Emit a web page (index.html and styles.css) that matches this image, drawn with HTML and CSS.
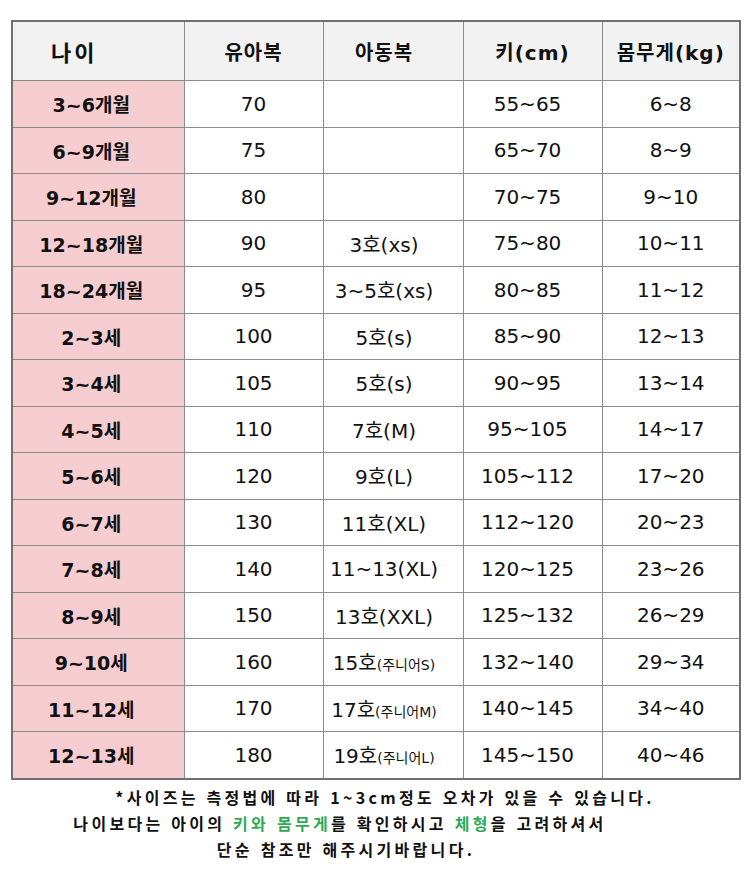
FILE: index.html
```html
<!DOCTYPE html>
<html lang="ko">
<head>
<meta charset="utf-8">
<link rel="stylesheet" href="styles.css">
</head>
<body>
<div class="page">
  <table class="size">
    <colgroup>
      <col class="c1"><col class="c2"><col class="c3"><col class="c4"><col class="c5">
    </colgroup>
    <thead>
      <tr><th class="first">나이</th><th>유아복</th><th class="left">아동복</th><th>키(cm)</th><th>몸무게(kg)</th></tr>
    </thead>
    <tbody>
      <tr><td class="age">3~6개월</td><td>70</td><td></td><td class="h">55~65</td><td>6~8</td></tr>
      <tr><td class="age">6~9개월</td><td>75</td><td></td><td class="h">65~70</td><td>8~9</td></tr>
      <tr><td class="age">9~12개월</td><td>80</td><td></td><td class="h">70~75</td><td>9~10</td></tr>
      <tr><td class="age">12~18개월</td><td>90</td><td class="left">3호(xs)</td><td class="h">75~80</td><td>10~11</td></tr>
      <tr><td class="age">18~24개월</td><td>95</td><td class="left">3~5호(xs)</td><td class="h">80~85</td><td>11~12</td></tr>
      <tr><td class="age">2~3세</td><td>100</td><td class="left">5호(s)</td><td class="h">85~90</td><td>12~13</td></tr>
      <tr><td class="age">3~4세</td><td>105</td><td class="left">5호(s)</td><td class="h">90~95</td><td>13~14</td></tr>
      <tr><td class="age">4~5세</td><td>110</td><td class="left">7호(M)</td><td class="h">95~105</td><td>14~17</td></tr>
      <tr><td class="age">5~6세</td><td>120</td><td class="left">9호(L)</td><td class="h">105~112</td><td>17~20</td></tr>
      <tr><td class="age">6~7세</td><td>130</td><td class="left">11호(XL)</td><td class="h">112~120</td><td>20~23</td></tr>
      <tr><td class="age">7~8세</td><td>140</td><td class="left">11~13(XL)</td><td class="h">120~125</td><td>23~26</td></tr>
      <tr><td class="age">8~9세</td><td>150</td><td class="left">13호(XXL)</td><td class="h">125~132</td><td>26~29</td></tr>
      <tr><td class="age">9~10세</td><td>160</td><td class="left">15호<span class="sm">(주니어S)</span></td><td class="h">132~140</td><td>29~34</td></tr>
      <tr><td class="age">11~12세</td><td>170</td><td class="left">17호<span class="sm">(주니어M)</span></td><td class="h">140~145</td><td>34~40</td></tr>
      <tr><td class="age">12~13세</td><td>180</td><td class="left">19호<span class="sm">(주니어L)</span></td><td class="h">145~150</td><td>40~46</td></tr>
    </tbody>
  </table>
  <div class="note">
    <p class="l1">*사이즈는 측정법에 따라 1~3cm정도 오차가 있을 수 있습니다.</p>
    <p class="l2">나이보다는 아이의 <span class="g">키와 몸무게</span>를 확인하시고 <span class="g">체형</span>을 고려하셔서</p>
    <p class="l3">단순 참조만 해주시기바랍니다.</p>
  </div>
</div>
</body>
</html>
```

FILE: styles.css
```css
html, body {
  margin: 0;
  padding: 0;
  background: #ffffff;
}
.page {
  width: 750px;
  padding: 20px 0 0 11px;
  box-sizing: border-box;
  font-family: "DejaVu Sans", "Noto Sans CJK KR", sans-serif;
  color: #111;
}
.size {
  border-collapse: collapse;
  table-layout: fixed;
  width: 728px;
  border: 2px solid #707070;
}
.c1 { width: 172px; }
.c2 { width: 139px; }
.c3 { width: 140px; }
.c4 { width: 139px; }
.c5 { width: 138px; }
.size th, .size td {
  border: 1px solid #8c8c8c;
  text-align: center;
  padding: 0;
  white-space: nowrap;
}
.size th {
  height: 58px;
  background: #f2f2f2;
  font-size: 20px;
  font-weight: 700;
  letter-spacing: 1px;
}
.size th.first {
  font-size: 22px;
  letter-spacing: 3px;
  padding-right: 48px;
}
.size th.left,
.size td.left {
  padding-right: 18px;
}
.size td.h {
  padding-right: 10px;
}
.size td {
  height: 45.5px;
  font-size: 20px;
  font-weight: 400;
}
.size td.age {
  background: #f5cdd0;
  font-weight: 700;
  font-size: 19px;
  padding-right: 14px;
}
.sm {
  font-size: 14px;
}
.note {
  width: 728px;
  text-align: center;
  margin-top: 4px;
  font-family: "Noto Sans CJK KR", sans-serif;
  font-weight: 700;
  font-size: 16px;
  letter-spacing: 3.3px;
}
.note p {
  margin: 0;
  line-height: 26px;
}
.note .l1 { padding-left: 20px; }
.note .l2 { padding-right: 70px; }
.note .l3 { padding-right: 58px; }
.g {
  color: #2eaa55;
}
```
